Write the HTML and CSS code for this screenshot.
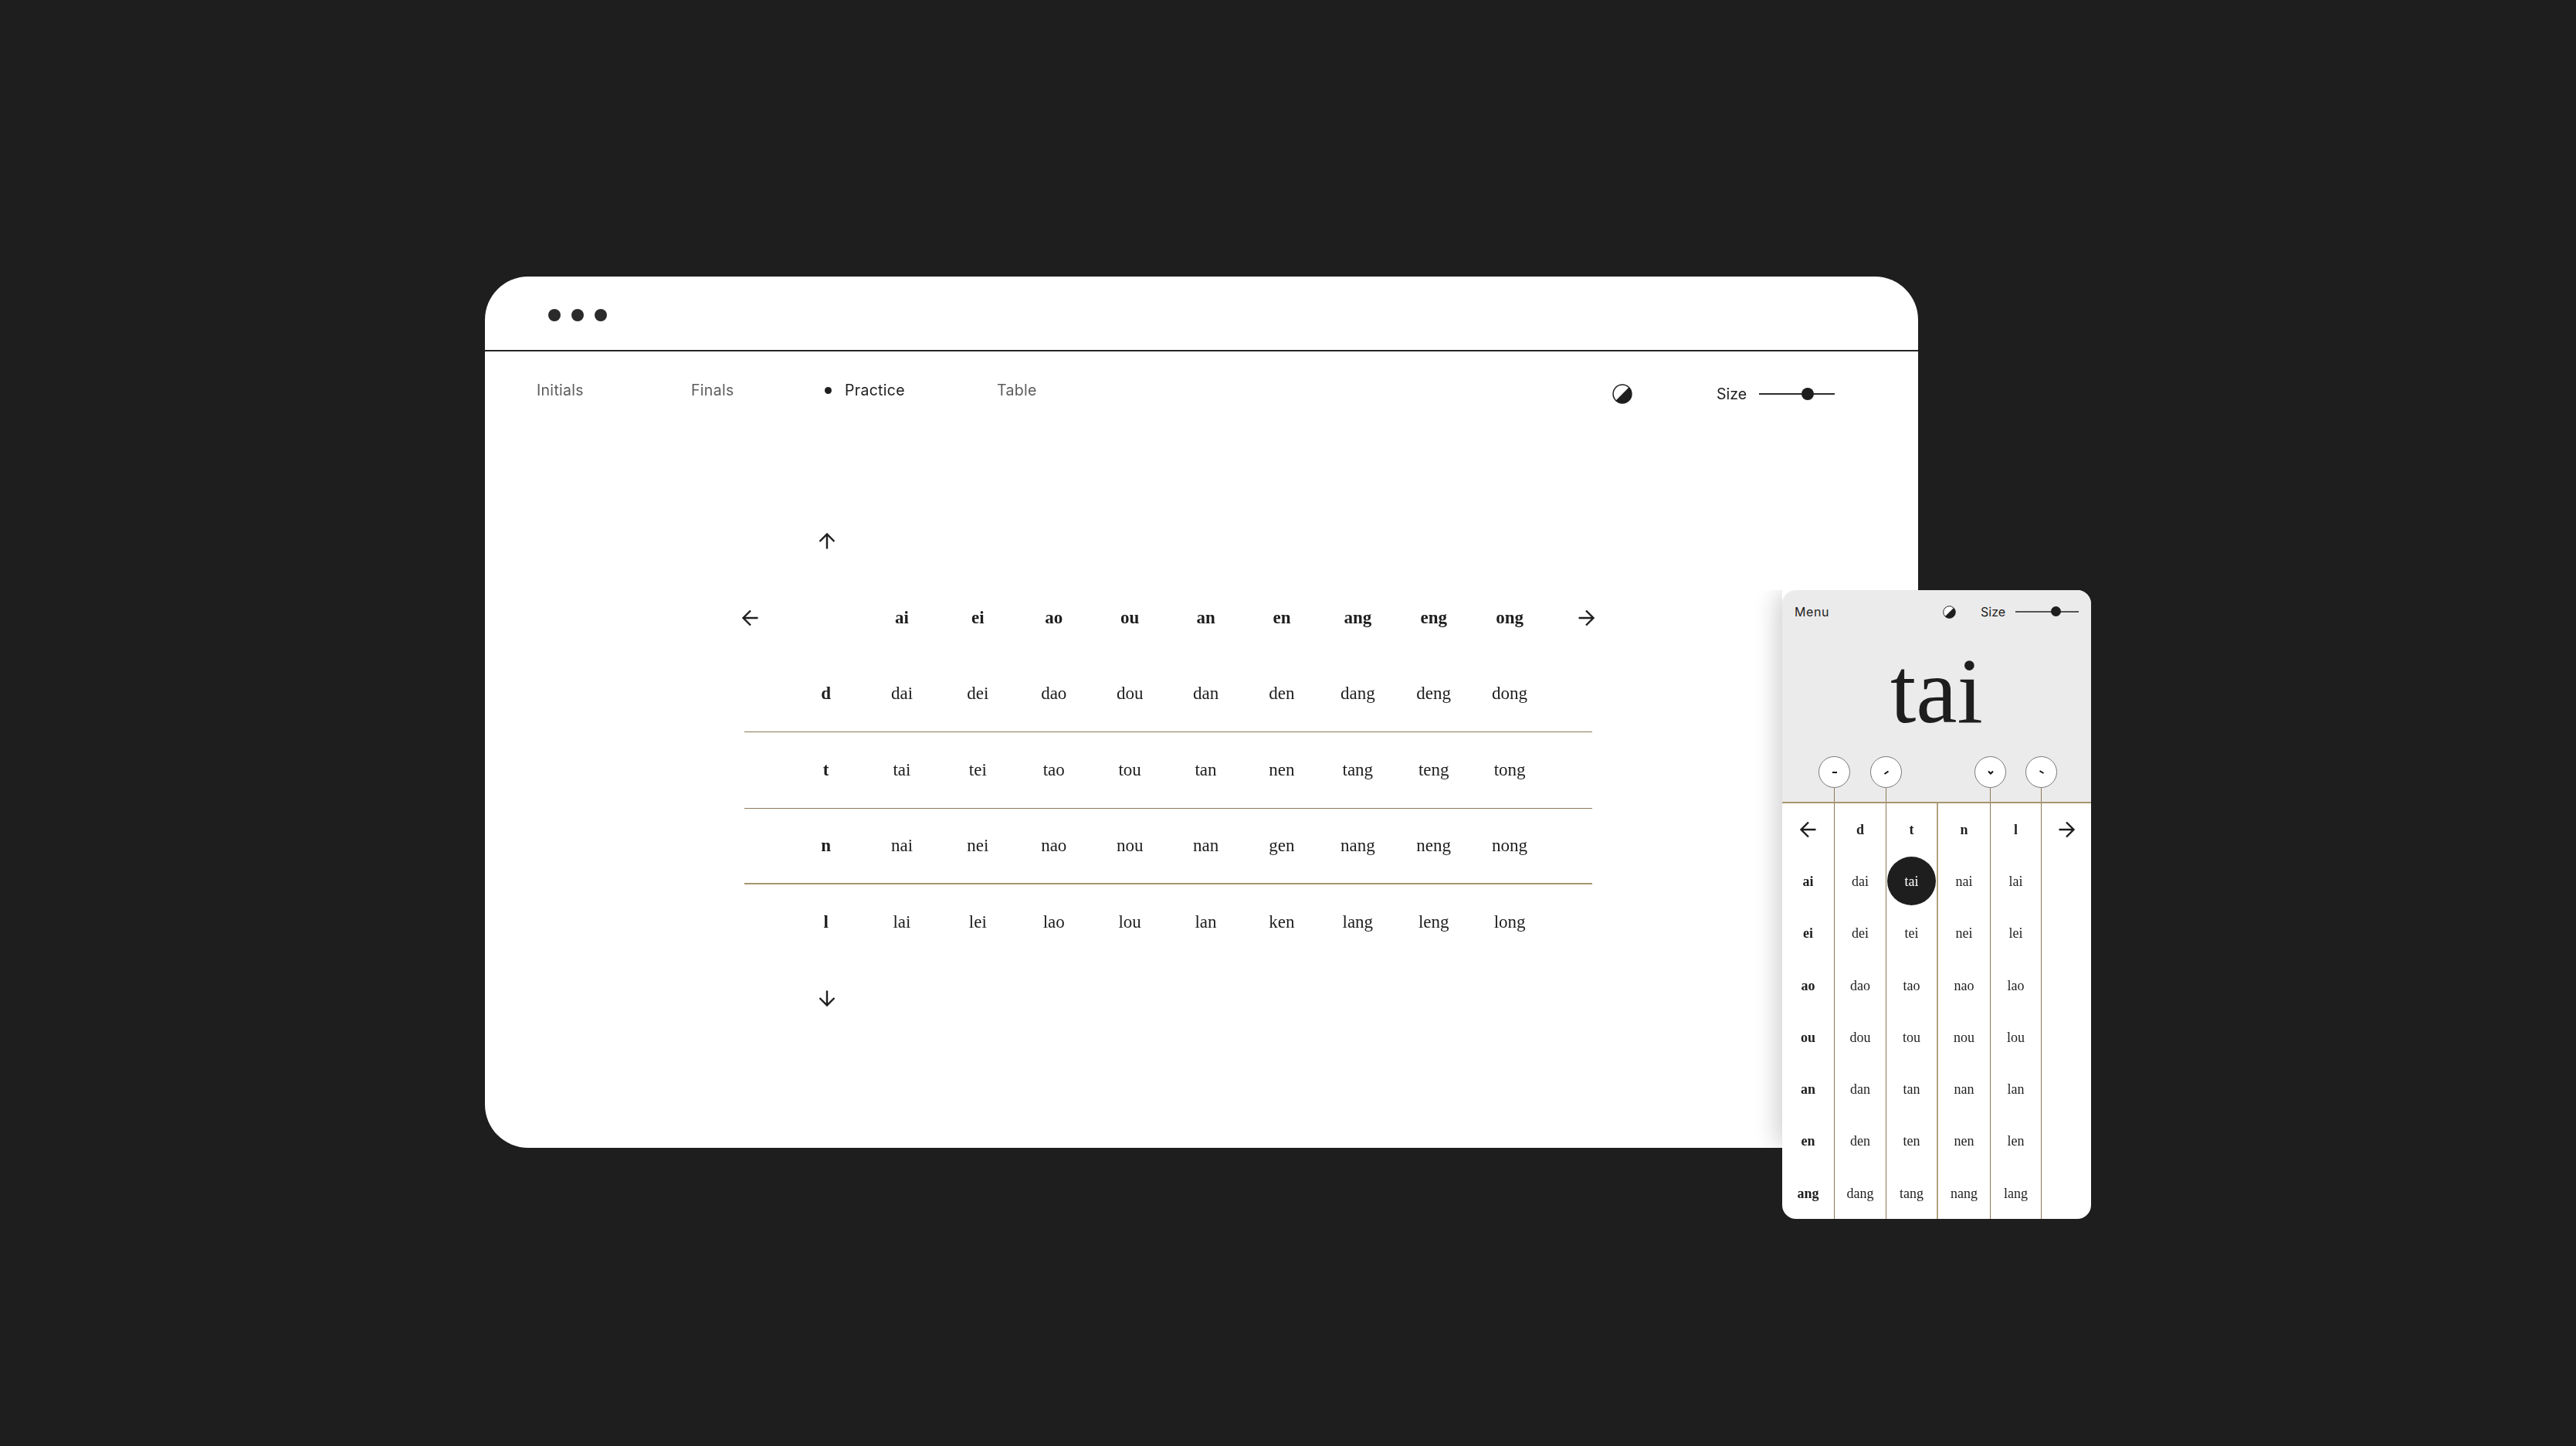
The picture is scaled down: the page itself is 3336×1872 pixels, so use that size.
FILE: index.html
```html
<!DOCTYPE html>
<html lang="en">
<head>
<meta charset="utf-8">
<title>Pinyin practice</title>
<link rel="stylesheet" href="styles.css">
</head>
<body>
<svg class="defs" width="0" height="0" aria-hidden="true">
  <symbol id="arrow-up" viewBox="0 0 24 24"><path d="M12 21.500V3.500M2.500 12L12 2.500L21.500 12" fill="none" stroke="currentColor" stroke-width="2.400"/></symbol>
  <symbol id="arrow-down" viewBox="0 0 24 24"><path d="M12 2.500V20.500M2.500 12L12 21.500L21.500 12" fill="none" stroke="currentColor" stroke-width="2.400"/></symbol>
  <symbol id="arrow-left" viewBox="0 0 24 24"><path d="M21.500 12H3.500M12 2.500L2.500 12L12 21.500" fill="none" stroke="currentColor" stroke-width="2.400"/></symbol>
  <symbol id="arrow-right" viewBox="0 0 24 24"><path d="M2.500 12H20.500M12 2.500L21.500 12L12 21.500" fill="none" stroke="currentColor" stroke-width="2.400"/></symbol>
  <symbol id="contrast" viewBox="0 0 24 24"><circle cx="12" cy="12" r="11" fill="#fff" stroke="#1e1e1e" stroke-width="1.400"/><path d="M19.800 4.200A11 11 0 0 1 4.200 19.800Z" fill="#1e1e1e"/></symbol>
</svg>
<div class="stage">
  <section class="window">
    <header class="titlebar"><i class="dot"></i><i class="dot"></i><i class="dot"></i></header>
    <div class="toolbar">
      <nav class="nav">
        <a>Initials</a>
        <a>Finals</a>
        <a class="active">Practice</a>
        <a>Table</a>
      </nav>
      <div class="controls">
        <svg class="contrast"><use href="#contrast"/></svg>
        <div class="size"><span>Size</span><div class="slider"><i></i></div></div>
      </div>
    </div>
    <div class="table">
      <div class="row"><span></span><span class="ico"><svg><use href="#arrow-up"/></svg></span></div>
      <div class="row head"><span class="ico"><svg><use href="#arrow-left"/></svg></span><span></span><span>ai</span><span>ei</span><span>ao</span><span>ou</span><span>an</span><span>en</span><span>ang</span><span>eng</span><span>ong</span><span class="ico"><svg><use href="#arrow-right"/></svg></span></div>
      <div class="row ruled"><span></span><b>d</b><span>dai</span><span>dei</span><span>dao</span><span>dou</span><span>dan</span><span>den</span><span>dang</span><span>deng</span><span>dong</span></div>
      <div class="row ruled"><span></span><b>t</b><span>tai</span><span>tei</span><span>tao</span><span>tou</span><span>tan</span><span>nen</span><span>tang</span><span>teng</span><span>tong</span></div>
      <div class="row ruled gold"><span></span><b>n</b><span>nai</span><span>nei</span><span>nao</span><span>nou</span><span>nan</span><span>gen</span><span>nang</span><span>neng</span><span>nong</span></div>
      <div class="row"><span></span><b>l</b><span>lai</span><span>lei</span><span>lao</span><span>lou</span><span>lan</span><span>ken</span><span>lang</span><span>leng</span><span>long</span></div>
      <div class="row"><span></span><span class="ico"><svg><use href="#arrow-down"/></svg></span></div>
    </div>
  </section>

  <section class="phone">
    <div class="phone-head">
      <div class="phone-bar">
        <span class="menu">Menu</span>
        <svg class="contrast small"><use href="#contrast"/></svg>
        <div class="size small"><span>Size</span><div class="slider"><i></i></div></div>
      </div>
      <div class="word">tai</div>
      <div class="tones">
        <div class="tone"><span class="disc"><svg viewBox="0 0 12 12"><path d="M3 6H9"/></svg></span><i></i></div>
        <div class="tone"><span class="disc"><svg viewBox="0 0 12 12"><path d="M3.500 8L8.500 4.500"/></svg></span><i></i></div>
        <div></div>
        <div class="tone"><span class="disc"><svg viewBox="0 0 12 12"><path d="M3 4.500L6 7.500L9 4.500"/></svg></span><i></i></div>
        <div class="tone"><span class="disc"><svg viewBox="0 0 12 12"><path d="M3.500 4L8.500 7"/></svg></span><i></i></div>
      </div>
    </div>
    <div class="phone-grid">
      <span class="ico"><svg><use href="#arrow-left"/></svg></span><b>d</b><b>t</b><b>n</b><b>l</b><span class="ico"><svg><use href="#arrow-right"/></svg></span>
      <b>ai</b><span>dai</span><span><em class="picked">tai</em></span><span>nai</span><span>lai</span><span></span>
      <b>ei</b><span>dei</span><span>tei</span><span>nei</span><span>lei</span><span></span>
      <b>ao</b><span>dao</span><span>tao</span><span>nao</span><span>lao</span><span></span>
      <b>ou</b><span>dou</span><span>tou</span><span>nou</span><span>lou</span><span></span>
      <b>an</b><span>dan</span><span>tan</span><span>nan</span><span>lan</span><span></span>
      <b>en</b><span>den</span><span>ten</span><span>nen</span><span>len</span><span></span>
      <b>ang</b><span>dang</span><span>tang</span><span>nang</span><span>lang</span><span></span>
    </div>
  </section>
</div>
</body>
</html>
```

FILE: styles.css
```css
* { box-sizing: border-box; }
html, body { margin: 0; padding: 0; background: #1e1e1e; }
.defs { position: absolute; }
.stage {
  position: relative;
  width: 3336px;
  height: 1872px;
  overflow: hidden;
  color: #1e1e1e;
  font-family: "Liberation Serif", serif;
}

/* Desktop window */
.window {
  position: absolute;
  left: 628px;
  top: 358px;
  width: 1856px;
  height: 1128px;
  background: #fff;
  border-radius: 56px;
  overflow: hidden;
  will-change: opacity;
}
.titlebar {
  height: 97px;
  border-bottom: 2px solid #262626;
  display: flex;
  align-items: center;
  gap: 14px;
  padding: 4px 0 0 82px;
}
.dot { width: 16px; height: 16px; border-radius: 50%; background: #2b2b2b; }
.toolbar {
  display: flex;
  justify-content: space-between;
  height: 197px;
  padding: 0 108px 0 67px;
  font-family: Inter, sans-serif;
  font-size: 19.500px;
  letter-spacing: .3px;
}
.nav {
  display: grid;
  grid-template-columns: 200px 173px 223px auto;
  height: 102px;
  align-items: center;
  color: #5c5c5c;
  line-height: 1;
}
.nav .active { color: #1e1e1e; padding-left: 26px; position: relative; }
.nav .active::before {
  content: "";
  position: absolute;
  left: 0;
  top: 5px;
  width: 9px;
  height: 9px;
  border-radius: 50%;
  background: #1e1e1e;
}
.controls { display: flex; align-items: center; height: 110px; gap: 109px; }
.contrast { width: 26px; height: 26px; display: block; }
.size { display: flex; align-items: center; gap: 16px; width: 153px; letter-spacing: 0; }
.slider { position: relative; flex: 1; height: 2px; background: #2b2b2b; }
.slider i {
  position: absolute;
  left: 55px;
  top: -7px;
  width: 16px;
  height: 16px;
  border-radius: 50%;
  background: #1e1e1e;
}

/* Practice table */
.table { margin-left: 295px; width: 1181px; font-size: 23px; }
.row {
  position: relative;
  display: grid;
  grid-template-columns: repeat(12, 98.4px);
  height: 98.4px;
  align-items: center;
  justify-items: center;
  line-height: 1;
}
.row > span:not(.ico), .row > b { padding-right: 2px; }
.row.ruled::after {
  content: "";
  position: absolute;
  left: 41px;
  right: 42px;
  bottom: -1px;
  height: 1px;
  background: #8c7a55;
}
.row.gold::after { height: 2px; background: #a8956f; }
.row b, .head span { font-weight: 700; }
.ico { display: flex; }
.ico svg { width: 24px; height: 24px; display: block; }

/* Phone */
.phone {
  position: absolute;
  left: 2308px;
  top: 764px;
  width: 400px;
  height: 814px;
  background: #fff;
  border-radius: 18px;
  overflow: hidden;
  will-change: opacity;
}
.stage::after {
  content: "";
  position: absolute;
  left: 2308px;
  top: 764px;
  width: 400px;
  height: 722px;
  border-radius: 18px;
  box-shadow: -8px 0 30px rgba(0, 0, 0, .18);
  clip-path: inset(0 100% 0 -60px);
}
.phone-head {
  height: 276px;
  background: #ebebeb;
  border-bottom: 2px solid #a8956f;
}
.phone-bar {
  display: flex;
  align-items: center;
  height: 56px;
  padding: 0 16px 0 16px;
  font-family: Inter, sans-serif;
  font-size: 16px;
}
.menu { letter-spacing: .6px; flex: 1; }
.contrast.small { width: 17px; height: 17px; margin-right: 32px; }
.size.small { width: 127px; gap: 13px; }
.size.small .slider { background: #555; }
.size.small .slider i { left: 46px; top: -6px; width: 13px; height: 13px; }
.word {
  height: 153px;
  text-align: center;
  font-size: 120px;
  line-height: 150px;
}
.tones {
  display: grid;
  grid-template-columns: 68px 67px 67px 68px 66px 64px;
  margin-top: 6px;
}
.tone {
  justify-self: end;
  margin-right: -20px;
  width: 41px;
  display: flex;
  flex-direction: column;
  align-items: center;
}
.disc {
  width: 41px;
  height: 41px;
  border-radius: 50%;
  background: #fff;
  border: 1px solid #777;
  display: flex;
  align-items: center;
  justify-content: center;
}
.disc svg { width: 12px; height: 12px; }
.disc path { fill: none; stroke: #111; stroke-width: 2; }
.tone i { width: 1px; height: 18px; background: #8c7a55; }

.phone-grid {
  display: grid;
  grid-template-columns: 68px 67px 67px 68px 66px 64px;
  grid-auto-rows: 67.300px;
  font-size: 18px;
  line-height: 1;
}
.phone-grid > * {
  display: flex;
  align-items: center;
  justify-content: center;
  border-right: 1px solid #8c7a55;
}
.phone-grid > :nth-child(6n) { border-right: 0; }
.phone-grid > :nth-child(6n+3) { border-right: 2px solid #b3a27f; }
.picked {
  width: 63px;
  height: 63px;
  flex: none;
  border-radius: 50%;
  background: #1e1e1e;
  color: #fff;
  font-style: normal;
  display: flex;
  align-items: center;
  justify-content: center;
}
```
